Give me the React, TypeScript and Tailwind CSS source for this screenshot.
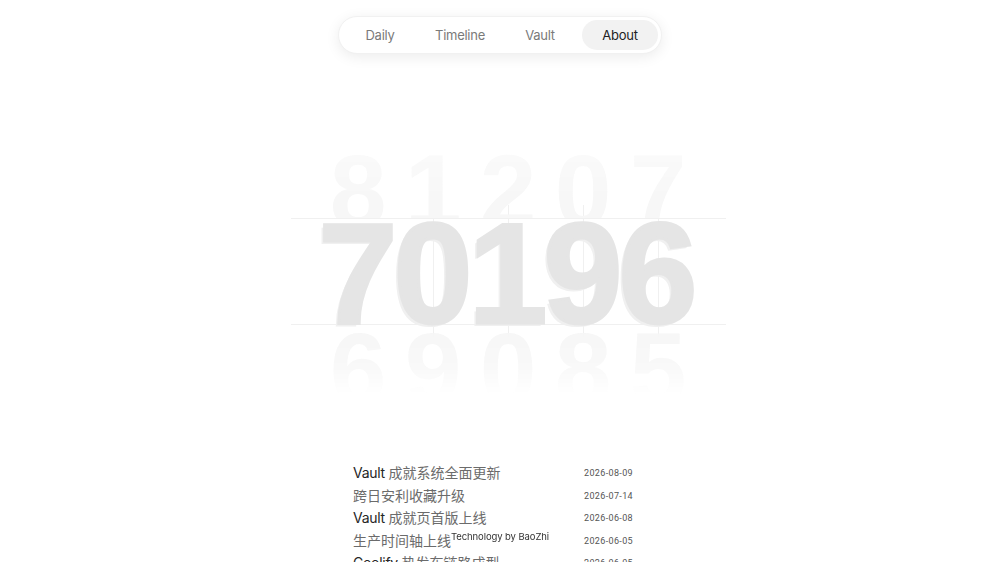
import React from "react";

const tabs = ["Daily", "Timeline", "Vault", "About"];

const topDigits = ["8", "1", "2", "0", "7"];
const mainDigits = ["7", "0", "1", "9", "6"];
const bottomDigits = ["6", "9", "0", "8", "5"];

const updates: Array<{ tag?: string; text: string; date: string }> = [
  { tag: "Vault", text: "成就系统全面更新", date: "2026-08-09" },
  { text: "跨日安利收藏升级", date: "2026-07-14" },
  { tag: "Vault", text: "成就页首版上线", date: "2026-06-08" },
  { text: "生产时间轴上线", date: "2026-06-05" },
  { tag: "Coolify", text: "热发布链路成型", date: "2026-06-05" },
];

function NavBar() {
  return (
    <nav className="mt-[16px] flex gap-[4px] rounded-full border border-[#f1f1f1] bg-white p-[3px] shadow-[0_3px_14px_rgba(0,0,0,0.08)]">
      {tabs.map((tab) => (
        <button
          key={tab}
          className={
            tab === "About"
              ? "h-[30px] w-[76px] rounded-full bg-[#f2f2f2] pt-[2px] text-[13px] tracking-[-0.02em] text-[#222]"
              : "h-[30px] w-[76px] rounded-full pt-[2px] text-[13px] tracking-[-0.02em] text-[#7a7a7a]"
          }>
          {tab}
        </button>
      ))}
    </nav>
  );
}

function Odometer() {
  const digitFont = { fontFamily: '"Liberation Sans", Arial, sans-serif' };
  return (
    <div className="relative mt-[86px] translate-x-[8px]" style={digitFont}>
      {[1, 2, 3, 4].map((i) => (
        <div
          key={i}
          className="absolute top-[65px] h-[132px] w-px bg-[#f0f0f0]"
          style={{ left: 30 + 75 * i + 37 }}
        />
      ))}
      <div className="relative flex px-[30px] [mask-image:linear-gradient(to_bottom,rgba(0,0,0,0.5),black_75%)]">
        {topDigits.map((d, i) => (
          <div
            key={i}
            className="flex h-[78px] w-[75px] justify-center overflow-hidden text-[102px] font-bold leading-[102px] text-[#f7f7f7]">
            {d}
          </div>
        ))}
      </div>
      <div className="relative flex border-y border-[#f0f0f0] px-[30px]">
        {mainDigits.map((d, i) => (
          <div
            key={i}
            className="flex h-[105px] w-[75px] justify-center overflow-visible pt-[2px] text-[142px] font-bold leading-[105px] text-[#e5e5e5] [-webkit-text-stroke:3px_#e5e5e5] [text-shadow:-3px_3px_0_#f0f0f0]">
            {d}
          </div>
        ))}
      </div>
      <div className="relative flex px-[30px] [mask-image:linear-gradient(to_bottom,black,rgba(0,0,0,0.7)_55%,transparent_92%)]">
        {bottomDigits.map((d, i) => (
          <div
            key={i}
            className="flex h-[75px] w-[75px] justify-center overflow-hidden text-[102px] font-bold leading-[88px] text-[#f6f6f6]">
            {d}
          </div>
        ))}
      </div>
    </div>
  );
}

function UpdateList() {
  return (
    <ul className="mt-[62px] w-[294px]">
      {updates.map((u, i) => (
        <li key={i} className="flex h-[22.5px] items-center">
          <span
            className="flex-1 text-[14px] leading-[22.5px] text-[#6b6b6b]"
            style={{ fontFamily: 'Inter, "Noto Sans CJK SC", sans-serif' }}>
            {u.tag && <span className="tracking-[-0.02em] text-[#262626]">{u.tag} </span>}
            {u.text}
          </span>
          <span
            className="w-[63px] pt-[1px] text-[9px] tracking-[0.04em] text-[#555]"
            style={{ fontFamily: "Roboto, sans-serif" }}>
            {u.date}
          </span>
        </li>
      ))}
    </ul>
  );
}

export default function App() {
  return (
    <div
      className="flex min-h-screen flex-col items-center bg-white pb-[60px]"
      style={{ fontFamily: 'Inter, "Noto Sans CJK SC", sans-serif' }}>
      <NavBar />
      <Odometer />
      <UpdateList />
      <div className="fixed bottom-[18px] left-1/2 -translate-x-1/2 text-[9.5px] tracking-[-0.01em] text-[#333]">
        Technology by BaoZhi
      </div>
    </div>
  );
}
